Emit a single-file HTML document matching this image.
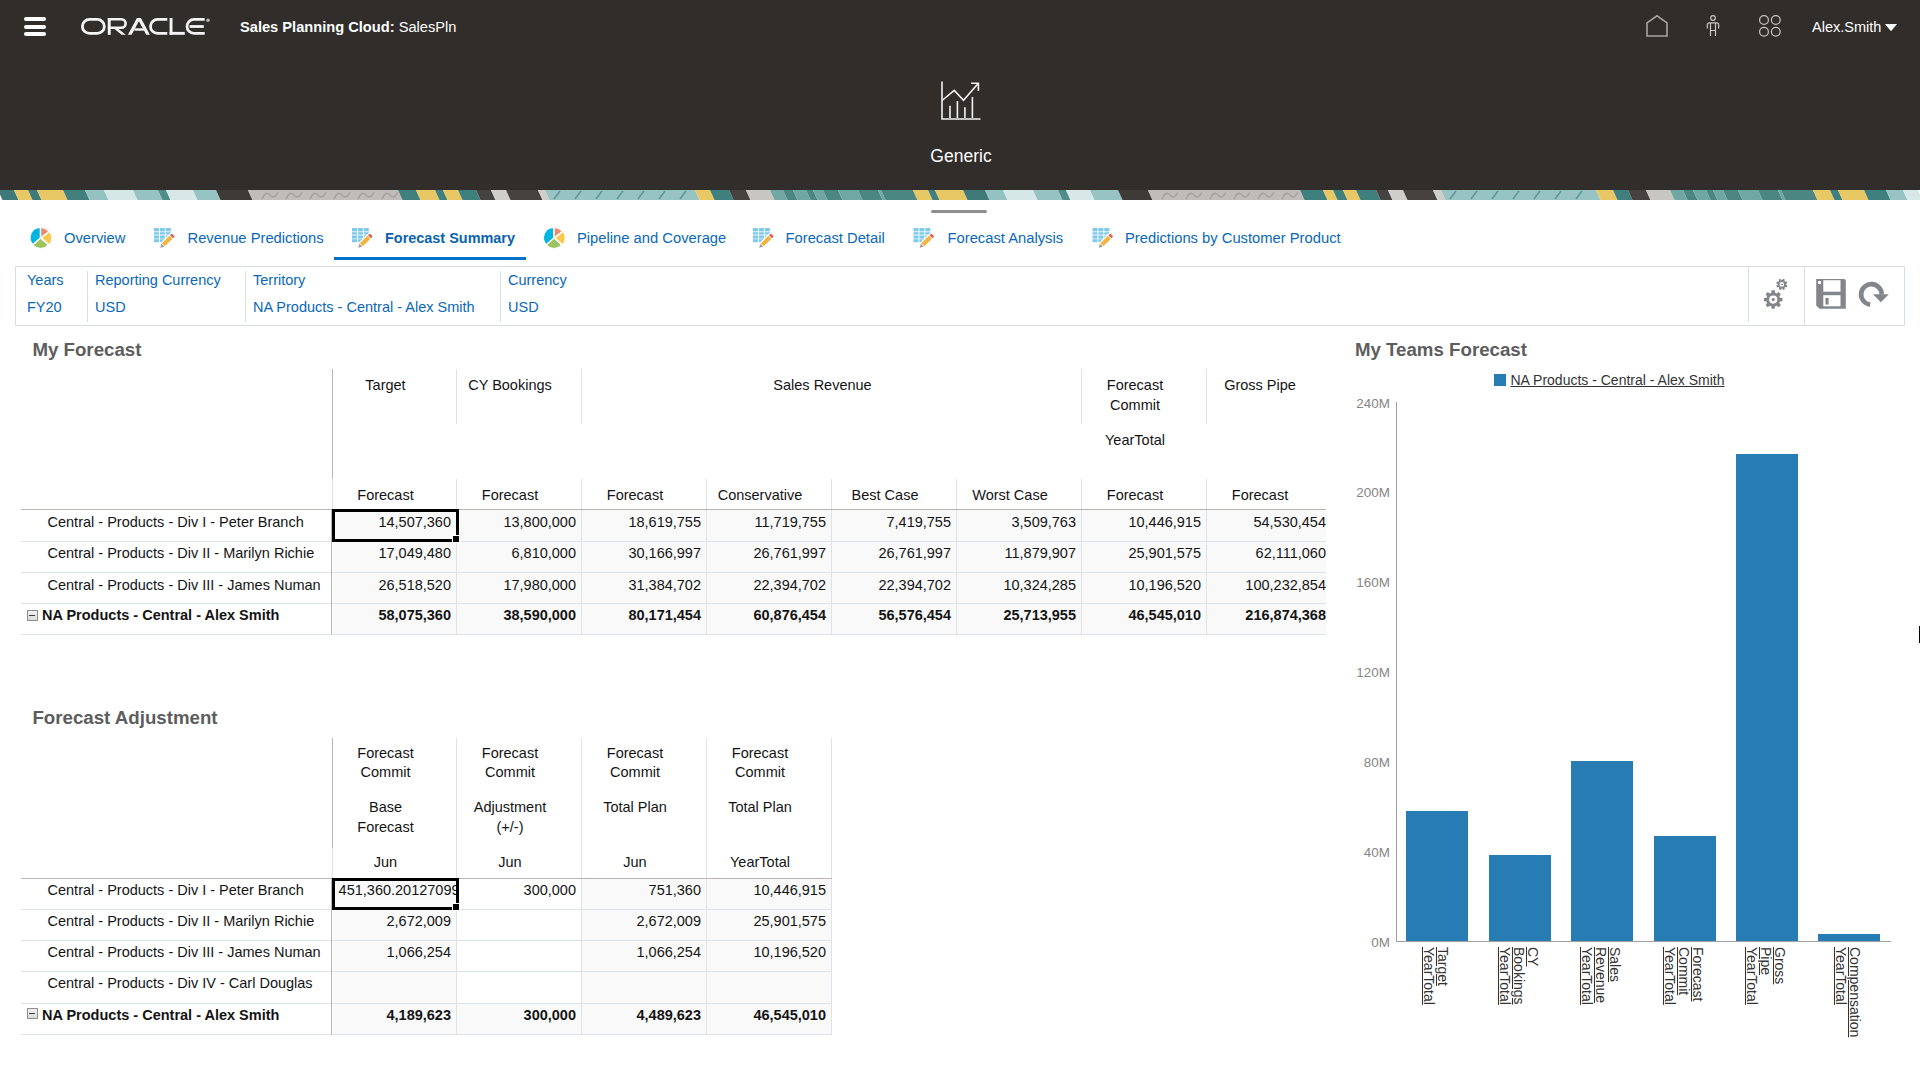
<!DOCTYPE html><html><head><meta charset="utf-8"><style>
html,body{margin:0;padding:0;width:1920px;height:1077px;overflow:hidden;background:#fff;font-family:"Liberation Sans",sans-serif;}
.t{position:absolute;white-space:nowrap;line-height:normal;}
.r{position:absolute;}
svg{position:absolute;overflow:visible;}
</style></head><body>
<div class="r" style="left:0px;top:0px;width:1920px;height:190px;background:#312d2a;"></div>
<div class="r" style="left:24px;top:17px;width:22px;height:4px;border-radius:2px;background:#fff"></div>
<div class="r" style="left:24px;top:24.5px;width:22px;height:4px;border-radius:2px;background:#fff"></div>
<div class="r" style="left:24px;top:32px;width:22px;height:4px;border-radius:2px;background:#fff"></div>
<svg style="left:0;top:0" width="1" height="1">
<g fill="none" stroke="#f4f4f4" stroke-width="2.8">
<rect x="82.4" y="19.4" width="21.9" height="14" rx="7"/>
<path d="M167.3 19.4 H157.5 A7 7 0 0 0 157.5 33.4 H167.3"/>
<path d="M204.7 19.4 H194 A7 7 0 0 0 194 33.4 H204.7"/>
</g>
<g fill="#f4f4f4">
<rect x="107.8" y="18" width="2.9" height="16.8"/>
<path d="M107.8 18 H121.4 A5.5 5.5 0 0 1 121.4 29 H107.8 V26.4 H121.4 A2.9 2.9 0 0 0 121.4 20.6 H107.8 Z"/>
<path d="M114.2 28.8 H118.2 L125.9 34.8 H121.6 Z"/>
<path d="M127.9 34.8 L136.9 18 H140.9 L149.9 34.8 H146.2 L138.9 21.2 L131.6 34.8 Z"/>
<rect x="134.5" y="28.3" width="10.2" height="2.4"/>
<rect x="169.6" y="18" width="2.9" height="16.8"/>
<rect x="169.6" y="31.9" width="15.2" height="2.9"/>
<rect x="189.6" y="25.1" width="14.2" height="2.8"/>
</g>
<circle cx="208" cy="20.3" r="1.8" fill="#b5b5b5"/></svg>
<div class="t" style="left:240.00px;top:18.74px;font-size:14.65px;color:#fff;font-weight:normal;"><b>Sales Planning Cloud:</b> SalesPln</div>
<svg style="left:0;top:0" width="1" height="1">
<path d="M1647 36 V22.8 L1657 15.8 L1667 22.8 V36 Z" fill="none" stroke="#a9a4a0" stroke-width="1.6"/>
<g fill="none" stroke="#cbc6c2" stroke-width="1.2">
<circle cx="1713" cy="18" r="2.3"/>
<path d="M1707.3 28.5 V24.8 Q1707.3 22.8 1709.5 22.8 H1716.5 Q1718.7 22.8 1718.7 24.8 V28.5"/>
<path d="M1710.5 23 V36 M1715.5 23 V36 M1710.5 30.5 H1715.5"/>
<circle cx="1764" cy="20" r="4.4"/><circle cx="1775.8" cy="20" r="4.4"/>
<circle cx="1764" cy="31.8" r="4.4"/><circle cx="1775.8" cy="31.8" r="4.4"/>
</g>
<path d="M1885 24 H1897 L1891 31.3 Z" fill="#fff"/>
</svg>
<div class="t" style="left:1812.00px;top:18.88px;font-size:14.5px;color:#fff;font-weight:normal;">Alex.Smith</div>
<svg style="left:0;top:0" width="1" height="1"><g fill="none" stroke="#f2f2f2" stroke-width="1.6">
<path d="M942 81.5 V119 H980.5"/>
<path d="M942 100.5 L954.3 90.4 L963.5 100.3 L978.4 83.2"/>
<path d="M971 83.2 H978.4 V91"/>
<path d="M950 105.8 V118 M957.4 101 V118 M964.9 107.2 V118 M972.4 97 V118"/>
</g></svg>
<div class="t" style="left:661.00px;width:600px;text-align:center;top:146.16px;font-size:17.5px;color:#fff;font-weight:normal;">Generic</div>
<svg style="left:0;top:190px" width="1920" height="10" viewBox="0 0 1920 10" preserveAspectRatio="none"><polygon points="-2,0 14,0 18.5,10 2.5,10" fill="#3f7a78"/><polygon points="14,0 28,0 32.5,10 18.5,10" fill="#e8c865"/><polygon points="28,0 37,0 41.5,10 32.5,10" fill="#3f7a78"/><polygon points="37,0 63,0 67.5,10 41.5,10" fill="#e8c865"/><polygon points="63,0 85,0 89.5,10 67.5,10" fill="#437f7d"/><polygon points="85,0 104,0 108.5,10 89.5,10" fill="#94c2c2"/><polygon points="104,0 133,0 137.5,10 108.5,10" fill="#d5e7e7"/><polygon points="133,0 158,0 162.5,10 137.5,10" fill="#97c2c2"/><polygon points="158,0 166,0 170.5,10 162.5,10" fill="#4f8c8a"/><polygon points="166,0 193,0 197.5,10 170.5,10" fill="#d8e8e8"/><polygon points="193,0 216,0 220.5,10 197.5,10" fill="#97c3c3"/><polygon points="216,0 248,0 252.5,10 220.5,10" fill="#3d3a38"/><polygon points="248,0 398,0 402.5,10 252.5,10" fill="#bfbcb9"/><polygon points="398,0 416,0 420.5,10 402.5,10" fill="#3f7f7d"/><polygon points="416,0 435,0 439.5,10 420.5,10" fill="#e8c865"/><polygon points="435,0 443,0 447.5,10 439.5,10" fill="#3f7f7d"/><polygon points="443,0 458,0 462.5,10 447.5,10" fill="#e8c865"/><polygon points="458,0 476,0 480.5,10 462.5,10" fill="#3f7f7d"/><polygon points="476,0 491,0 495.5,10 480.5,10" fill="#45423f"/><polygon points="491,0 506,0 510.5,10 495.5,10" fill="#d0cecb"/><polygon points="506,0 538,0 542.5,10 510.5,10" fill="#45423f"/><polygon points="538,0 545,0 549.5,10 542.5,10" fill="#d0cecb"/><polygon points="545,0 695,0 699.5,10 549.5,10" fill="#97c3c3"/><polygon points="695,0 710,0 714.5,10 699.5,10" fill="#e8c865"/><polygon points="710,0 729,0 733.5,10 714.5,10" fill="#3f7f7d"/><polygon points="729,0 746,0 750.5,10 733.5,10" fill="#47423f"/><polygon points="746,0 770,0 774.5,10 750.5,10" fill="#c8c6c2"/><polygon points="770,0 783,0 787.5,10 774.5,10" fill="#70a7a3"/><polygon points="783,0 793,0 797.5,10 787.5,10" fill="#4b8683"/><polygon points="793,0 806,0 810.5,10 797.5,10" fill="#70a7a3"/><polygon points="806,0 813,0 817.5,10 810.5,10" fill="#4b8683"/><polygon points="813,0 823,0 827.5,10 817.5,10" fill="#70a7a3"/><polygon points="823,0 838,0 842.5,10 827.5,10" fill="#4b8683"/><polygon points="838,0 858,0 862.5,10 842.5,10" fill="#70a7a3"/><polygon points="858,0 878,0 882.5,10 862.5,10" fill="#4b8683"/><polygon points="878,0 881,0 885.5,10 882.5,10" fill="#70a7a3"/><polygon points="881,0 913,0 917.5,10 885.5,10" fill="#4b8683"/><polygon points="913,0 928,0 932.5,10 917.5,10" fill="#e8c865"/><polygon points="928,0 935,0 939.5,10 932.5,10" fill="#3f7f7d"/><polygon points="935,0 963,0 967.5,10 939.5,10" fill="#e8c865"/><polygon points="963,0 985,0 989.5,10 967.5,10" fill="#3f7a78"/><polygon points="985,0 1003,0 1007.5,10 989.5,10" fill="#94c2c2"/><polygon points="1003,0 1033,0 1037.5,10 1007.5,10" fill="#d5e7e7"/><polygon points="1033,0 1058,0 1062.5,10 1037.5,10" fill="#97c2c2"/><polygon points="1058,0 1066,0 1070.5,10 1062.5,10" fill="#4f8c8a"/><polygon points="1066,0 1090,0 1094.5,10 1070.5,10" fill="#d8e8e8"/><polygon points="1090,0 1118,0 1122.5,10 1094.5,10" fill="#97c3c3"/><polygon points="1118,0 1148,0 1152.5,10 1122.5,10" fill="#3d3a38"/><polygon points="1148,0 1300,0 1304.5,10 1152.5,10" fill="#bfbcb9"/><polygon points="1300,0 1323,0 1327.5,10 1304.5,10" fill="#3f7f7d"/><polygon points="1323,0 1333,0 1337.5,10 1327.5,10" fill="#e8c865"/><polygon points="1333,0 1343,0 1347.5,10 1337.5,10" fill="#3f7f7d"/><polygon points="1343,0 1356,0 1360.5,10 1347.5,10" fill="#e8c865"/><polygon points="1356,0 1376,0 1380.5,10 1360.5,10" fill="#3f7f7d"/><polygon points="1376,0 1388,0 1392.5,10 1380.5,10" fill="#45423f"/><polygon points="1388,0 1403,0 1407.5,10 1392.5,10" fill="#d0cecb"/><polygon points="1403,0 1433,0 1437.5,10 1407.5,10" fill="#45423f"/><polygon points="1433,0 1441,0 1445.5,10 1437.5,10" fill="#d0cecb"/><polygon points="1441,0 1596,0 1600.5,10 1445.5,10" fill="#97c3c3"/><polygon points="1596,0 1613,0 1617.5,10 1600.5,10" fill="#e8c865"/><polygon points="1613,0 1628,0 1632.5,10 1617.5,10" fill="#3f7f7d"/><polygon points="1628,0 1646,0 1650.5,10 1632.5,10" fill="#47423f"/><polygon points="1646,0 1670,0 1674.5,10 1650.5,10" fill="#c8c6c2"/><polygon points="1670,0 1683,0 1687.5,10 1674.5,10" fill="#70a7a3"/><polygon points="1683,0 1693,0 1697.5,10 1687.5,10" fill="#4b8683"/><polygon points="1693,0 1706,0 1710.5,10 1697.5,10" fill="#70a7a3"/><polygon points="1706,0 1713,0 1717.5,10 1710.5,10" fill="#4b8683"/><polygon points="1713,0 1723,0 1727.5,10 1717.5,10" fill="#70a7a3"/><polygon points="1723,0 1738,0 1742.5,10 1727.5,10" fill="#4b8683"/><polygon points="1738,0 1758,0 1762.5,10 1742.5,10" fill="#70a7a3"/><polygon points="1758,0 1778,0 1782.5,10 1762.5,10" fill="#4b8683"/><polygon points="1778,0 1781,0 1785.5,10 1782.5,10" fill="#70a7a3"/><polygon points="1781,0 1813,0 1817.5,10 1785.5,10" fill="#4b8683"/><polygon points="1813,0 1830,0 1834.5,10 1817.5,10" fill="#e8c865"/><polygon points="1830,0 1838,0 1842.5,10 1834.5,10" fill="#3f7f7d"/><polygon points="1838,0 1864,0 1868.5,10 1842.5,10" fill="#e8c865"/><polygon points="1864,0 1886,0 1890.5,10 1868.5,10" fill="#3f7f7d"/><polygon points="1886,0 1903,0 1907.5,10 1890.5,10" fill="#97c3c3"/><polygon points="1903,0 1918,0 1922.5,10 1907.5,10" fill="#d8e8e8"/><path d="M560 1 L554 9" stroke="#5d9896" stroke-width="1.6"/><path d="M581 1 L575 9" stroke="#5d9896" stroke-width="1.6"/><path d="M602 1 L596 9" stroke="#5d9896" stroke-width="1.6"/><path d="M623 1 L617 9" stroke="#5d9896" stroke-width="1.6"/><path d="M644 1 L638 9" stroke="#5d9896" stroke-width="1.6"/><path d="M665 1 L659 9" stroke="#5d9896" stroke-width="1.6"/><path d="M686 1 L680 9" stroke="#5d9896" stroke-width="1.6"/><path d="M1456 1 L1450 9" stroke="#5d9896" stroke-width="1.6"/><path d="M1477 1 L1471 9" stroke="#5d9896" stroke-width="1.6"/><path d="M1498 1 L1492 9" stroke="#5d9896" stroke-width="1.6"/><path d="M1519 1 L1513 9" stroke="#5d9896" stroke-width="1.6"/><path d="M1540 1 L1534 9" stroke="#5d9896" stroke-width="1.6"/><path d="M1561 1 L1555 9" stroke="#5d9896" stroke-width="1.6"/><path d="M1582 1 L1576 9" stroke="#5d9896" stroke-width="1.6"/><path d="M262 9 Q266 0 270 5 T278 2" fill="none" stroke="#a7a39f" stroke-width="1.5"/><path d="M286 9 Q290 0 294 5 T302 2" fill="none" stroke="#a7a39f" stroke-width="1.5"/><path d="M310 9 Q314 0 318 5 T326 2" fill="none" stroke="#a7a39f" stroke-width="1.5"/><path d="M334 9 Q338 0 342 5 T350 2" fill="none" stroke="#a7a39f" stroke-width="1.5"/><path d="M358 9 Q362 0 366 5 T374 2" fill="none" stroke="#a7a39f" stroke-width="1.5"/><path d="M382 9 Q386 0 390 5 T398 2" fill="none" stroke="#a7a39f" stroke-width="1.5"/><path d="M1162 9 Q1166 0 1170 5 T1178 2" fill="none" stroke="#a7a39f" stroke-width="1.5"/><path d="M1186 9 Q1190 0 1194 5 T1202 2" fill="none" stroke="#a7a39f" stroke-width="1.5"/><path d="M1210 9 Q1214 0 1218 5 T1226 2" fill="none" stroke="#a7a39f" stroke-width="1.5"/><path d="M1234 9 Q1238 0 1242 5 T1250 2" fill="none" stroke="#a7a39f" stroke-width="1.5"/><path d="M1258 9 Q1262 0 1266 5 T1274 2" fill="none" stroke="#a7a39f" stroke-width="1.5"/><path d="M1282 9 Q1286 0 1290 5 T1298 2" fill="none" stroke="#a7a39f" stroke-width="1.5"/></svg>
<div class="r" style="left:930.5px;top:210px;width:56px;height:3.2px;background:#8f8f8f;border-radius:2px;"></div>
<svg style="left:0;top:0" width="1" height="1"><path d="M40.73 237.53 L40.73 227.53 A10 10 0 0 1 48.61 231.37 Z" fill="#ec8a70" stroke="#fff" stroke-width="1"/><path d="M41.80 237.84 L49.68 231.69 A10 10 0 0 1 49.23 244.53 Z" fill="#f8c94a" stroke="#fff" stroke-width="1"/><path d="M40.60 238.40 L48.03 245.09 A10 10 0 0 1 33.17 245.09 Z" fill="#9cc45e" stroke="#fff" stroke-width="1"/><path d="M40.23 237.64 L32.80 244.33 A10 10 0 0 1 40.23 227.64 Z" fill="#00b5e0" stroke="#fff" stroke-width="1"/><rect x="154.00" y="228.00" width="5" height="3.4" fill="#7ecbe9"/><rect x="154.00" y="232.20" width="5" height="2.4" fill="#7ecbe9"/><rect x="154.00" y="234.60" width="5" height="1.4" fill="#b7e1f2"/><rect x="154.00" y="236.00" width="5" height="2.6" fill="#7ecbe9"/><rect x="154.00" y="239.20" width="5" height="3.0" fill="#7ecbe9"/><rect x="159.90" y="228.00" width="5" height="3.4" fill="#7ecbe9"/><rect x="159.90" y="232.20" width="5" height="2.4" fill="#7ecbe9"/><rect x="159.90" y="234.60" width="5" height="1.4" fill="#b7e1f2"/><rect x="159.90" y="236.00" width="5" height="2.6" fill="#7ecbe9"/><rect x="159.90" y="239.20" width="5" height="3.0" fill="#7ecbe9"/><rect x="165.80" y="228.00" width="5" height="3.4" fill="#7ecbe9"/><rect x="165.80" y="232.20" width="5" height="2.4" fill="#7ecbe9"/><rect x="165.80" y="234.60" width="5" height="1.4" fill="#b7e1f2"/><rect x="165.80" y="236.00" width="5" height="2.6" fill="#7ecbe9"/><rect x="165.80" y="239.20" width="5" height="3.0" fill="#7ecbe9"/><polygon points="157.54,245.79 171.42,232.22 176.04,236.94 162.15,250.51" fill="#fff"/><polygon points="160.20,247.80 161.31,243.78 164.24,246.79" fill="#9a9c9e"/><polygon points="161.81,243.29 169.40,235.87 172.34,238.88 164.74,246.30" fill="#f4b540"/><polygon points="169.97,235.32 171.55,233.78 172.42,234.10 174.18,235.90 174.48,236.78 172.91,238.32" fill="#e65b4c"/><rect x="352.00" y="228.00" width="5" height="3.4" fill="#7ecbe9"/><rect x="352.00" y="232.20" width="5" height="2.4" fill="#7ecbe9"/><rect x="352.00" y="234.60" width="5" height="1.4" fill="#b7e1f2"/><rect x="352.00" y="236.00" width="5" height="2.6" fill="#7ecbe9"/><rect x="352.00" y="239.20" width="5" height="3.0" fill="#7ecbe9"/><rect x="357.90" y="228.00" width="5" height="3.4" fill="#7ecbe9"/><rect x="357.90" y="232.20" width="5" height="2.4" fill="#7ecbe9"/><rect x="357.90" y="234.60" width="5" height="1.4" fill="#b7e1f2"/><rect x="357.90" y="236.00" width="5" height="2.6" fill="#7ecbe9"/><rect x="357.90" y="239.20" width="5" height="3.0" fill="#7ecbe9"/><rect x="363.80" y="228.00" width="5" height="3.4" fill="#7ecbe9"/><rect x="363.80" y="232.20" width="5" height="2.4" fill="#7ecbe9"/><rect x="363.80" y="234.60" width="5" height="1.4" fill="#b7e1f2"/><rect x="363.80" y="236.00" width="5" height="2.6" fill="#7ecbe9"/><rect x="363.80" y="239.20" width="5" height="3.0" fill="#7ecbe9"/><polygon points="355.54,245.79 369.42,232.22 374.04,236.94 360.15,250.51" fill="#fff"/><polygon points="358.20,247.80 359.31,243.78 362.24,246.79" fill="#9a9c9e"/><polygon points="359.81,243.29 367.40,235.87 370.34,238.88 362.74,246.30" fill="#f4b540"/><polygon points="367.97,235.32 369.55,233.78 370.42,234.10 372.18,235.90 372.48,236.78 370.91,238.32" fill="#e65b4c"/><path d="M554.13 237.53 L554.13 227.53 A10 10 0 0 1 562.01 231.37 Z" fill="#ec8a70" stroke="#fff" stroke-width="1"/><path d="M555.20 237.84 L563.08 231.69 A10 10 0 0 1 562.63 244.53 Z" fill="#f8c94a" stroke="#fff" stroke-width="1"/><path d="M554.00 238.40 L561.43 245.09 A10 10 0 0 1 546.57 245.09 Z" fill="#9cc45e" stroke="#fff" stroke-width="1"/><path d="M553.63 237.64 L546.20 244.33 A10 10 0 0 1 553.63 227.64 Z" fill="#00b5e0" stroke="#fff" stroke-width="1"/><rect x="753.00" y="228.00" width="5" height="3.4" fill="#7ecbe9"/><rect x="753.00" y="232.20" width="5" height="2.4" fill="#7ecbe9"/><rect x="753.00" y="234.60" width="5" height="1.4" fill="#b7e1f2"/><rect x="753.00" y="236.00" width="5" height="2.6" fill="#7ecbe9"/><rect x="753.00" y="239.20" width="5" height="3.0" fill="#7ecbe9"/><rect x="758.90" y="228.00" width="5" height="3.4" fill="#7ecbe9"/><rect x="758.90" y="232.20" width="5" height="2.4" fill="#7ecbe9"/><rect x="758.90" y="234.60" width="5" height="1.4" fill="#b7e1f2"/><rect x="758.90" y="236.00" width="5" height="2.6" fill="#7ecbe9"/><rect x="758.90" y="239.20" width="5" height="3.0" fill="#7ecbe9"/><rect x="764.80" y="228.00" width="5" height="3.4" fill="#7ecbe9"/><rect x="764.80" y="232.20" width="5" height="2.4" fill="#7ecbe9"/><rect x="764.80" y="234.60" width="5" height="1.4" fill="#b7e1f2"/><rect x="764.80" y="236.00" width="5" height="2.6" fill="#7ecbe9"/><rect x="764.80" y="239.20" width="5" height="3.0" fill="#7ecbe9"/><polygon points="756.54,245.79 770.42,232.22 775.04,236.94 761.15,250.51" fill="#fff"/><polygon points="759.20,247.80 760.31,243.78 763.24,246.79" fill="#9a9c9e"/><polygon points="760.81,243.29 768.40,235.87 771.34,238.88 763.74,246.30" fill="#f4b540"/><polygon points="768.97,235.32 770.55,233.78 771.42,234.10 773.18,235.90 773.48,236.78 771.91,238.32" fill="#e65b4c"/><rect x="913.50" y="228.00" width="5" height="3.4" fill="#7ecbe9"/><rect x="913.50" y="232.20" width="5" height="2.4" fill="#7ecbe9"/><rect x="913.50" y="234.60" width="5" height="1.4" fill="#b7e1f2"/><rect x="913.50" y="236.00" width="5" height="2.6" fill="#7ecbe9"/><rect x="913.50" y="239.20" width="5" height="3.0" fill="#7ecbe9"/><rect x="919.40" y="228.00" width="5" height="3.4" fill="#7ecbe9"/><rect x="919.40" y="232.20" width="5" height="2.4" fill="#7ecbe9"/><rect x="919.40" y="234.60" width="5" height="1.4" fill="#b7e1f2"/><rect x="919.40" y="236.00" width="5" height="2.6" fill="#7ecbe9"/><rect x="919.40" y="239.20" width="5" height="3.0" fill="#7ecbe9"/><rect x="925.30" y="228.00" width="5" height="3.4" fill="#7ecbe9"/><rect x="925.30" y="232.20" width="5" height="2.4" fill="#7ecbe9"/><rect x="925.30" y="234.60" width="5" height="1.4" fill="#b7e1f2"/><rect x="925.30" y="236.00" width="5" height="2.6" fill="#7ecbe9"/><rect x="925.30" y="239.20" width="5" height="3.0" fill="#7ecbe9"/><polygon points="917.04,245.79 930.92,232.22 935.54,236.94 921.65,250.51" fill="#fff"/><polygon points="919.70,247.80 920.81,243.78 923.74,246.79" fill="#9a9c9e"/><polygon points="921.31,243.29 928.90,235.87 931.84,238.88 924.24,246.30" fill="#f4b540"/><polygon points="929.47,235.32 931.05,233.78 931.92,234.10 933.68,235.90 933.98,236.78 932.41,238.32" fill="#e65b4c"/><rect x="1092.50" y="228.00" width="5" height="3.4" fill="#7ecbe9"/><rect x="1092.50" y="232.20" width="5" height="2.4" fill="#7ecbe9"/><rect x="1092.50" y="234.60" width="5" height="1.4" fill="#b7e1f2"/><rect x="1092.50" y="236.00" width="5" height="2.6" fill="#7ecbe9"/><rect x="1092.50" y="239.20" width="5" height="3.0" fill="#7ecbe9"/><rect x="1098.40" y="228.00" width="5" height="3.4" fill="#7ecbe9"/><rect x="1098.40" y="232.20" width="5" height="2.4" fill="#7ecbe9"/><rect x="1098.40" y="234.60" width="5" height="1.4" fill="#b7e1f2"/><rect x="1098.40" y="236.00" width="5" height="2.6" fill="#7ecbe9"/><rect x="1098.40" y="239.20" width="5" height="3.0" fill="#7ecbe9"/><rect x="1104.30" y="228.00" width="5" height="3.4" fill="#7ecbe9"/><rect x="1104.30" y="232.20" width="5" height="2.4" fill="#7ecbe9"/><rect x="1104.30" y="234.60" width="5" height="1.4" fill="#b7e1f2"/><rect x="1104.30" y="236.00" width="5" height="2.6" fill="#7ecbe9"/><rect x="1104.30" y="239.20" width="5" height="3.0" fill="#7ecbe9"/><polygon points="1096.04,245.79 1109.92,232.22 1114.54,236.94 1100.65,250.51" fill="#fff"/><polygon points="1098.70,247.80 1099.81,243.78 1102.74,246.79" fill="#9a9c9e"/><polygon points="1100.31,243.29 1107.90,235.87 1110.84,238.88 1103.24,246.30" fill="#f4b540"/><polygon points="1108.47,235.32 1110.05,233.78 1110.92,234.10 1112.68,235.90 1112.98,236.78 1111.41,238.32" fill="#e65b4c"/></svg>
<div class="t" style="left:64.00px;top:229.65px;font-size:14.75px;color:#0a68b9;font-weight:normal;">Overview</div>
<div class="t" style="left:187.50px;top:229.65px;font-size:14.75px;color:#0a68b9;font-weight:normal;">Revenue Predictions</div>
<div class="t" style="left:385.00px;top:229.92px;font-size:14.45px;color:#0a62ae;font-weight:bold;">Forecast Summary</div>
<div class="r" style="left:334px;top:257px;width:192px;height:3px;background:#0572ce;"></div>
<div class="t" style="left:577.00px;top:229.65px;font-size:14.75px;color:#0a68b9;font-weight:normal;">Pipeline and Coverage</div>
<div class="t" style="left:785.50px;top:229.65px;font-size:14.75px;color:#0a68b9;font-weight:normal;">Forecast Detail</div>
<div class="t" style="left:947.50px;top:229.65px;font-size:14.75px;color:#0a68b9;font-weight:normal;">Forecast Analysis</div>
<div class="t" style="left:1125.00px;top:229.65px;font-size:14.75px;color:#0a68b9;font-weight:normal;">Predictions by Customer Product</div>
<div class="r" style="left:15px;top:266px;width:1888px;height:58px;border:1px solid #d6dfe6;"></div>
<div class="r" style="left:87px;top:271px;width:1px;height:51px;background:#d6dfe6;"></div>
<div class="r" style="left:245px;top:271px;width:1px;height:51px;background:#d6dfe6;"></div>
<div class="r" style="left:500px;top:271px;width:1px;height:51px;background:#d6dfe6;"></div>
<div class="r" style="left:1748px;top:266px;width:1px;height:56px;background:#d6dfe6;"></div>
<div class="r" style="left:1804px;top:266px;width:1px;height:59px;background:#d6dfe6;"></div>
<div class="t" style="left:27.00px;top:271.58px;font-size:14.5px;color:#0a68b9;font-weight:normal;">Years</div>
<div class="t" style="left:27.00px;top:298.88px;font-size:14.5px;color:#0a68b9;font-weight:normal;">FY20</div>
<div class="t" style="left:95.00px;top:271.58px;font-size:14.5px;color:#0a68b9;font-weight:normal;">Reporting Currency</div>
<div class="t" style="left:95.00px;top:298.88px;font-size:14.5px;color:#0a68b9;font-weight:normal;">USD</div>
<div class="t" style="left:253.00px;top:271.58px;font-size:14.5px;color:#0a68b9;font-weight:normal;">Territory</div>
<div class="t" style="left:253.00px;top:298.88px;font-size:14.5px;color:#0a68b9;font-weight:normal;">NA Products - Central - Alex Smith</div>
<div class="t" style="left:508.00px;top:271.58px;font-size:14.5px;color:#0a68b9;font-weight:normal;">Currency</div>
<div class="t" style="left:508.00px;top:298.88px;font-size:14.5px;color:#0a68b9;font-weight:normal;">USD</div>
<svg style="left:0;top:0" width="1" height="1"><path d="M1779.93 297.67 L1782.47 298.03 L1782.47 301.17 L1779.93 301.53 L1779.32 302.99 L1780.86 305.05 L1778.65 307.26 L1776.59 305.72 L1775.13 306.33 L1774.77 308.87 L1771.63 308.87 L1771.27 306.33 L1769.81 305.72 L1767.75 307.26 L1765.54 305.05 L1767.08 302.99 L1766.47 301.53 L1763.93 301.17 L1763.93 298.03 L1766.47 297.67 L1767.08 296.21 L1765.54 294.15 L1767.75 291.94 L1769.81 293.48 L1771.27 292.87 L1771.63 290.33 L1774.77 290.33 L1775.13 292.87 L1776.59 293.48 L1778.65 291.94 L1780.86 294.15 L1779.32 296.21 Z M1777.30 299.60 A4.1 4.1 0 1 0 1769.10 299.60 A4.1 4.1 0 1 0 1777.30 299.60 Z" fill="#82868b" fill-rule="evenodd"/><circle cx="1773.2" cy="299.6" r="1.6" fill="#82868b"/><path d="M1786.08 284.85 L1787.37 285.62 L1786.65 287.39 L1785.19 287.05 L1784.51 287.74 L1784.87 289.20 L1783.12 289.94 L1782.32 288.67 L1781.35 288.68 L1780.58 289.97 L1778.81 289.25 L1779.15 287.79 L1778.46 287.11 L1777.00 287.47 L1776.26 285.72 L1777.53 284.92 L1777.52 283.95 L1776.23 283.18 L1776.95 281.41 L1778.41 281.75 L1779.09 281.06 L1778.73 279.60 L1780.48 278.86 L1781.28 280.13 L1782.25 280.12 L1783.02 278.83 L1784.79 279.55 L1784.45 281.01 L1785.14 281.69 L1786.60 281.33 L1787.34 283.08 L1786.07 283.88 Z M1784.10 284.40 A2.3 2.3 0 1 0 1779.50 284.40 A2.3 2.3 0 1 0 1784.10 284.40 Z" fill="#82868b" fill-rule="evenodd"/><rect x="1780.6" y="283.9" width="2.4" height="1" fill="#82868b"/><path d="M1816.2 279 H1843.8 Q1845.8 279 1845.8 281 V308.8 H1819.5 L1816.2 305.5 Z" fill="#82868b"/><rect x="1823.3" y="280.2" width="17.2" height="11.5" fill="#fff"/><rect x="1823.3" y="295.2" width="17.2" height="11.1" fill="#fff"/><rect x="1825.5" y="297.9" width="3.1" height="6.6" fill="#82868b"/><rect x="1818" y="281" width="3" height="3" fill="#fff"/><path d="M1870.15 304.6 A10.3 10.3 0 1 1 1881.7 294.4" fill="none" stroke="#82868b" stroke-width="4.7"/><path d="M1873 294.3 H1888.8 L1880.8 302.3 Z" fill="#82868b"/></svg>
<div class="t" style="left:32.40px;top:338.68px;font-size:18.7px;color:#5d5d5d;font-weight:bold;">My Forecast</div>
<div class="t" style="left:1354.90px;top:338.68px;font-size:18.7px;color:#5d5d5d;font-weight:bold;">My Teams Forecast</div>
<div class="t" style="left:32.40px;top:706.58px;font-size:18.7px;color:#5d5d5d;font-weight:bold;">Forecast Adjustment</div>
<div class="r" style="left:333px;top:510px;width:993px;height:31px;background:#f9f9f9;"></div>
<div class="r" style="left:333px;top:542px;width:993px;height:30px;background:#f9f9f9;"></div>
<div class="r" style="left:333px;top:573px;width:993px;height:30px;background:#f9f9f9;"></div>
<div class="r" style="left:333px;top:604px;width:993px;height:30px;background:#f9f9f9;"></div>
<div class="r" style="left:332px;top:369px;width:1px;height:110px;background:#b9b5b1;"></div>
<div class="r" style="left:332px;top:479px;width:1px;height:30px;background:#dde3e9;"></div>
<div class="r" style="left:456px;top:369px;width:1px;height:55px;background:#dde3e9;"></div>
<div class="r" style="left:581px;top:369px;width:1px;height:55px;background:#dde3e9;"></div>
<div class="r" style="left:1081px;top:369px;width:1px;height:55px;background:#dde3e9;"></div>
<div class="r" style="left:1206px;top:369px;width:1px;height:55px;background:#dde3e9;"></div>
<div class="r" style="left:456px;top:479px;width:1px;height:30px;background:#dde3e9;"></div>
<div class="r" style="left:581px;top:479px;width:1px;height:30px;background:#dde3e9;"></div>
<div class="r" style="left:706px;top:479px;width:1px;height:30px;background:#dde3e9;"></div>
<div class="r" style="left:831px;top:479px;width:1px;height:30px;background:#dde3e9;"></div>
<div class="r" style="left:956px;top:479px;width:1px;height:30px;background:#dde3e9;"></div>
<div class="r" style="left:1081px;top:479px;width:1px;height:30px;background:#dde3e9;"></div>
<div class="r" style="left:1206px;top:479px;width:1px;height:30px;background:#dde3e9;"></div>
<div class="r" style="left:21px;top:509px;width:1305px;height:1px;background:#b9b5b1;"></div>
<div class="r" style="left:21px;top:541px;width:1305px;height:1px;background:#dde3e9;"></div>
<div class="r" style="left:21px;top:572px;width:1305px;height:1px;background:#dde3e9;"></div>
<div class="r" style="left:21px;top:603px;width:1305px;height:1px;background:#dde3e9;"></div>
<div class="r" style="left:21px;top:634px;width:1305px;height:1px;background:#dde3e9;"></div>
<div class="r" style="left:331px;top:510px;width:1px;height:124px;background:#b9b5b1;"></div>
<div class="r" style="left:456px;top:510px;width:1px;height:124px;background:#dde3e9;"></div>
<div class="r" style="left:581px;top:510px;width:1px;height:124px;background:#dde3e9;"></div>
<div class="r" style="left:706px;top:510px;width:1px;height:124px;background:#dde3e9;"></div>
<div class="r" style="left:831px;top:510px;width:1px;height:124px;background:#dde3e9;"></div>
<div class="r" style="left:956px;top:510px;width:1px;height:124px;background:#dde3e9;"></div>
<div class="r" style="left:1081px;top:510px;width:1px;height:124px;background:#dde3e9;"></div>
<div class="r" style="left:1206px;top:510px;width:1px;height:124px;background:#dde3e9;"></div>
<div class="t" style="left:85.50px;width:600px;text-align:center;top:377.08px;font-size:14.5px;color:#141414;font-weight:normal;">Target</div>
<div class="t" style="left:210.00px;width:600px;text-align:center;top:377.08px;font-size:14.5px;color:#141414;font-weight:normal;">CY Bookings</div>
<div class="t" style="left:522.50px;width:600px;text-align:center;top:377.08px;font-size:14.5px;color:#141414;font-weight:normal;">Sales Revenue</div>
<div class="t" style="left:835.00px;width:600px;text-align:center;top:377.48px;font-size:14.5px;color:#141414;font-weight:normal;">Forecast</div>
<div class="t" style="left:835.00px;width:600px;text-align:center;top:397.48px;font-size:14.5px;color:#141414;font-weight:normal;">Commit</div>
<div class="t" style="left:960.00px;width:600px;text-align:center;top:377.08px;font-size:14.5px;color:#141414;font-weight:normal;">Gross Pipe</div>
<div class="t" style="left:835.00px;width:600px;text-align:center;top:432.48px;font-size:14.5px;color:#141414;font-weight:normal;">YearTotal</div>
<div class="t" style="left:85.50px;width:600px;text-align:center;top:486.58px;font-size:14.5px;color:#141414;font-weight:normal;">Forecast</div>
<div class="t" style="left:210.00px;width:600px;text-align:center;top:486.58px;font-size:14.5px;color:#141414;font-weight:normal;">Forecast</div>
<div class="t" style="left:335.00px;width:600px;text-align:center;top:486.58px;font-size:14.5px;color:#141414;font-weight:normal;">Forecast</div>
<div class="t" style="left:460.00px;width:600px;text-align:center;top:486.58px;font-size:14.5px;color:#141414;font-weight:normal;">Conservative</div>
<div class="t" style="left:585.00px;width:600px;text-align:center;top:486.58px;font-size:14.5px;color:#141414;font-weight:normal;">Best Case</div>
<div class="t" style="left:710.00px;width:600px;text-align:center;top:486.58px;font-size:14.5px;color:#141414;font-weight:normal;">Worst Case</div>
<div class="t" style="left:835.00px;width:600px;text-align:center;top:486.58px;font-size:14.5px;color:#141414;font-weight:normal;">Forecast</div>
<div class="t" style="left:960.00px;width:600px;text-align:center;top:486.58px;font-size:14.5px;color:#141414;font-weight:normal;">Forecast</div>
<div class="r" style="left:0;top:0;width:1326px;height:1077px;overflow:hidden;">
<div class="t" style="left:47.50px;top:514.08px;font-size:14.5px;color:#141414;font-weight:normal;">Central - Products - Div I - Peter Branch</div>
<div class="t" style="left:-149.00px;width:600px;text-align:right;top:514.08px;font-size:14.5px;color:#141414;font-weight:normal;">14,507,360</div>
<div class="t" style="left:-24.00px;width:600px;text-align:right;top:514.08px;font-size:14.5px;color:#141414;font-weight:normal;">13,800,000</div>
<div class="t" style="left:101.00px;width:600px;text-align:right;top:514.08px;font-size:14.5px;color:#141414;font-weight:normal;">18,619,755</div>
<div class="t" style="left:226.00px;width:600px;text-align:right;top:514.08px;font-size:14.5px;color:#141414;font-weight:normal;">11,719,755</div>
<div class="t" style="left:351.00px;width:600px;text-align:right;top:514.08px;font-size:14.5px;color:#141414;font-weight:normal;">7,419,755</div>
<div class="t" style="left:476.00px;width:600px;text-align:right;top:514.08px;font-size:14.5px;color:#141414;font-weight:normal;">3,509,763</div>
<div class="t" style="left:601.00px;width:600px;text-align:right;top:514.08px;font-size:14.5px;color:#141414;font-weight:normal;">10,446,915</div>
<div class="t" style="left:726.00px;width:600px;text-align:right;top:514.08px;font-size:14.5px;color:#141414;font-weight:normal;">54,530,454</div>
<div class="t" style="left:47.50px;top:545.28px;font-size:14.5px;color:#141414;font-weight:normal;">Central - Products - Div II - Marilyn Richie</div>
<div class="t" style="left:-149.00px;width:600px;text-align:right;top:545.28px;font-size:14.5px;color:#141414;font-weight:normal;">17,049,480</div>
<div class="t" style="left:-24.00px;width:600px;text-align:right;top:545.28px;font-size:14.5px;color:#141414;font-weight:normal;">6,810,000</div>
<div class="t" style="left:101.00px;width:600px;text-align:right;top:545.28px;font-size:14.5px;color:#141414;font-weight:normal;">30,166,997</div>
<div class="t" style="left:226.00px;width:600px;text-align:right;top:545.28px;font-size:14.5px;color:#141414;font-weight:normal;">26,761,997</div>
<div class="t" style="left:351.00px;width:600px;text-align:right;top:545.28px;font-size:14.5px;color:#141414;font-weight:normal;">26,761,997</div>
<div class="t" style="left:476.00px;width:600px;text-align:right;top:545.28px;font-size:14.5px;color:#141414;font-weight:normal;">11,879,907</div>
<div class="t" style="left:601.00px;width:600px;text-align:right;top:545.28px;font-size:14.5px;color:#141414;font-weight:normal;">25,901,575</div>
<div class="t" style="left:726.00px;width:600px;text-align:right;top:545.28px;font-size:14.5px;color:#141414;font-weight:normal;">62,111,060</div>
<div class="t" style="left:47.50px;top:577.28px;font-size:14.5px;color:#141414;font-weight:normal;">Central - Products - Div III - James Numan</div>
<div class="t" style="left:-149.00px;width:600px;text-align:right;top:577.28px;font-size:14.5px;color:#141414;font-weight:normal;">26,518,520</div>
<div class="t" style="left:-24.00px;width:600px;text-align:right;top:577.28px;font-size:14.5px;color:#141414;font-weight:normal;">17,980,000</div>
<div class="t" style="left:101.00px;width:600px;text-align:right;top:577.28px;font-size:14.5px;color:#141414;font-weight:normal;">31,384,702</div>
<div class="t" style="left:226.00px;width:600px;text-align:right;top:577.28px;font-size:14.5px;color:#141414;font-weight:normal;">22,394,702</div>
<div class="t" style="left:351.00px;width:600px;text-align:right;top:577.28px;font-size:14.5px;color:#141414;font-weight:normal;">22,394,702</div>
<div class="t" style="left:476.00px;width:600px;text-align:right;top:577.28px;font-size:14.5px;color:#141414;font-weight:normal;">10,324,285</div>
<div class="t" style="left:601.00px;width:600px;text-align:right;top:577.28px;font-size:14.5px;color:#141414;font-weight:normal;">10,196,520</div>
<div class="t" style="left:726.00px;width:600px;text-align:right;top:577.28px;font-size:14.5px;color:#141414;font-weight:normal;">100,232,854</div>
<div class="r" style="left:27px;top:610px;width:9px;height:9px;border:1px solid #8e8e8a;background:linear-gradient(#f2f2f2,#dcdcdc);"></div>
<div class="r" style="left:29.2px;top:615.0px;width:6.2px;height:1.3px;background:#3a3a3a;"></div>
<div class="t" style="left:42.00px;top:607.28px;font-size:14.5px;color:#141414;font-weight:bold;">NA Products - Central - Alex Smith</div>
<div class="t" style="left:-149.00px;width:600px;text-align:right;top:607.28px;font-size:14.5px;color:#141414;font-weight:bold;">58,075,360</div>
<div class="t" style="left:-24.00px;width:600px;text-align:right;top:607.28px;font-size:14.5px;color:#141414;font-weight:bold;">38,590,000</div>
<div class="t" style="left:101.00px;width:600px;text-align:right;top:607.28px;font-size:14.5px;color:#141414;font-weight:bold;">80,171,454</div>
<div class="t" style="left:226.00px;width:600px;text-align:right;top:607.28px;font-size:14.5px;color:#141414;font-weight:bold;">60,876,454</div>
<div class="t" style="left:351.00px;width:600px;text-align:right;top:607.28px;font-size:14.5px;color:#141414;font-weight:bold;">56,576,454</div>
<div class="t" style="left:476.00px;width:600px;text-align:right;top:607.28px;font-size:14.5px;color:#141414;font-weight:bold;">25,713,955</div>
<div class="t" style="left:601.00px;width:600px;text-align:right;top:607.28px;font-size:14.5px;color:#141414;font-weight:bold;">46,545,010</div>
<div class="t" style="left:726.00px;width:600px;text-align:right;top:607.28px;font-size:14.5px;color:#141414;font-weight:bold;">216,874,368</div>
</div>
<div class="r" style="left:332px;top:509px;width:121px;height:27px;border:3px solid #000;"></div>
<div class="r" style="left:453px;top:536px;width:6px;height:6px;background:#000;outline:1px solid #fff;"></div>
<div class="r" style="left:333px;top:879px;width:123px;height:30px;background:#f9f9f9;"></div>
<div class="r" style="left:457px;top:879px;width:124px;height:30px;background:#fff;"></div>
<div class="r" style="left:582px;top:879px;width:124px;height:30px;background:#f9f9f9;"></div>
<div class="r" style="left:707px;top:879px;width:124px;height:30px;background:#f9f9f9;"></div>
<div class="r" style="left:333px;top:910px;width:123px;height:30px;background:#f9f9f9;"></div>
<div class="r" style="left:457px;top:910px;width:124px;height:30px;background:#fff;"></div>
<div class="r" style="left:582px;top:910px;width:124px;height:30px;background:#f9f9f9;"></div>
<div class="r" style="left:707px;top:910px;width:124px;height:30px;background:#f9f9f9;"></div>
<div class="r" style="left:333px;top:941px;width:123px;height:30px;background:#f9f9f9;"></div>
<div class="r" style="left:457px;top:941px;width:124px;height:30px;background:#fff;"></div>
<div class="r" style="left:582px;top:941px;width:124px;height:30px;background:#f9f9f9;"></div>
<div class="r" style="left:707px;top:941px;width:124px;height:30px;background:#f9f9f9;"></div>
<div class="r" style="left:333px;top:972px;width:123px;height:31px;background:#f9f9f9;"></div>
<div class="r" style="left:457px;top:972px;width:124px;height:31px;background:#fff;"></div>
<div class="r" style="left:582px;top:972px;width:124px;height:31px;background:#f9f9f9;"></div>
<div class="r" style="left:707px;top:972px;width:124px;height:31px;background:#f9f9f9;"></div>
<div class="r" style="left:333px;top:1004px;width:123px;height:30px;background:#f9f9f9;"></div>
<div class="r" style="left:457px;top:1004px;width:124px;height:30px;background:#f9f9f9;"></div>
<div class="r" style="left:582px;top:1004px;width:124px;height:30px;background:#f9f9f9;"></div>
<div class="r" style="left:707px;top:1004px;width:124px;height:30px;background:#f9f9f9;"></div>
<div class="r" style="left:332px;top:738px;width:1px;height:110px;background:#b9b5b1;"></div>
<div class="r" style="left:332px;top:848px;width:1px;height:30px;background:#dde3e9;"></div>
<div class="r" style="left:456px;top:738px;width:1px;height:140px;background:#dde3e9;"></div>
<div class="r" style="left:581px;top:738px;width:1px;height:140px;background:#dde3e9;"></div>
<div class="r" style="left:706px;top:738px;width:1px;height:140px;background:#dde3e9;"></div>
<div class="r" style="left:831px;top:738px;width:1px;height:140px;background:#dde3e9;"></div>
<div class="r" style="left:21px;top:878px;width:811px;height:1px;background:#b9b5b1;"></div>
<div class="r" style="left:21px;top:909px;width:811px;height:1px;background:#dde3e9;"></div>
<div class="r" style="left:21px;top:940px;width:811px;height:1px;background:#dde3e9;"></div>
<div class="r" style="left:21px;top:971px;width:811px;height:1px;background:#dde3e9;"></div>
<div class="r" style="left:21px;top:1003px;width:811px;height:1px;background:#dde3e9;"></div>
<div class="r" style="left:21px;top:1034px;width:811px;height:1px;background:#dde3e9;"></div>
<div class="r" style="left:331px;top:879px;width:1px;height:156px;background:#b9b5b1;"></div>
<div class="r" style="left:456px;top:879px;width:1px;height:156px;background:#dde3e9;"></div>
<div class="r" style="left:581px;top:879px;width:1px;height:156px;background:#dde3e9;"></div>
<div class="r" style="left:706px;top:879px;width:1px;height:156px;background:#dde3e9;"></div>
<div class="r" style="left:831px;top:879px;width:1px;height:156px;background:#dde3e9;"></div>
<div class="t" style="left:85.50px;width:600px;text-align:center;top:744.68px;font-size:14.5px;color:#141414;font-weight:normal;">Forecast</div>
<div class="t" style="left:85.50px;width:600px;text-align:center;top:764.48px;font-size:14.5px;color:#141414;font-weight:normal;">Commit</div>
<div class="t" style="left:85.50px;width:600px;text-align:center;top:799.38px;font-size:14.5px;color:#141414;font-weight:normal;">Base</div>
<div class="t" style="left:85.50px;width:600px;text-align:center;top:819.38px;font-size:14.5px;color:#141414;font-weight:normal;">Forecast</div>
<div class="t" style="left:85.50px;width:600px;text-align:center;top:854.28px;font-size:14.5px;color:#141414;font-weight:normal;">Jun</div>
<div class="t" style="left:210.00px;width:600px;text-align:center;top:744.68px;font-size:14.5px;color:#141414;font-weight:normal;">Forecast</div>
<div class="t" style="left:210.00px;width:600px;text-align:center;top:764.48px;font-size:14.5px;color:#141414;font-weight:normal;">Commit</div>
<div class="t" style="left:210.00px;width:600px;text-align:center;top:799.38px;font-size:14.5px;color:#141414;font-weight:normal;">Adjustment</div>
<div class="t" style="left:210.00px;width:600px;text-align:center;top:819.38px;font-size:14.5px;color:#141414;font-weight:normal;">(+/-)</div>
<div class="t" style="left:210.00px;width:600px;text-align:center;top:854.28px;font-size:14.5px;color:#141414;font-weight:normal;">Jun</div>
<div class="t" style="left:335.00px;width:600px;text-align:center;top:744.68px;font-size:14.5px;color:#141414;font-weight:normal;">Forecast</div>
<div class="t" style="left:335.00px;width:600px;text-align:center;top:764.48px;font-size:14.5px;color:#141414;font-weight:normal;">Commit</div>
<div class="t" style="left:335.00px;width:600px;text-align:center;top:799.38px;font-size:14.5px;color:#141414;font-weight:normal;">Total Plan</div>
<div class="t" style="left:335.00px;width:600px;text-align:center;top:854.28px;font-size:14.5px;color:#141414;font-weight:normal;">Jun</div>
<div class="t" style="left:460.00px;width:600px;text-align:center;top:744.68px;font-size:14.5px;color:#141414;font-weight:normal;">Forecast</div>
<div class="t" style="left:460.00px;width:600px;text-align:center;top:764.48px;font-size:14.5px;color:#141414;font-weight:normal;">Commit</div>
<div class="t" style="left:460.00px;width:600px;text-align:center;top:799.38px;font-size:14.5px;color:#141414;font-weight:normal;">Total Plan</div>
<div class="t" style="left:460.00px;width:600px;text-align:center;top:854.28px;font-size:14.5px;color:#141414;font-weight:normal;">YearTotal</div>
<div class="t" style="left:47.50px;top:881.88px;font-size:14.5px;color:#141414;font-weight:normal;">Central - Products - Div I - Peter Branch</div>
<div class="t" style="left:-24.00px;width:600px;text-align:right;top:881.88px;font-size:14.5px;color:#141414;font-weight:normal;">300,000</div>
<div class="t" style="left:101.00px;width:600px;text-align:right;top:881.88px;font-size:14.5px;color:#141414;font-weight:normal;">751,360</div>
<div class="t" style="left:226.00px;width:600px;text-align:right;top:881.88px;font-size:14.5px;color:#141414;font-weight:normal;">10,446,915</div>
<div class="t" style="left:47.50px;top:913.08px;font-size:14.5px;color:#141414;font-weight:normal;">Central - Products - Div II - Marilyn Richie</div>
<div class="t" style="left:-149.00px;width:600px;text-align:right;top:913.08px;font-size:14.5px;color:#141414;font-weight:normal;">2,672,009</div>
<div class="t" style="left:101.00px;width:600px;text-align:right;top:913.08px;font-size:14.5px;color:#141414;font-weight:normal;">2,672,009</div>
<div class="t" style="left:226.00px;width:600px;text-align:right;top:913.08px;font-size:14.5px;color:#141414;font-weight:normal;">25,901,575</div>
<div class="t" style="left:47.50px;top:944.28px;font-size:14.5px;color:#141414;font-weight:normal;">Central - Products - Div III - James Numan</div>
<div class="t" style="left:-149.00px;width:600px;text-align:right;top:944.28px;font-size:14.5px;color:#141414;font-weight:normal;">1,066,254</div>
<div class="t" style="left:101.00px;width:600px;text-align:right;top:944.28px;font-size:14.5px;color:#141414;font-weight:normal;">1,066,254</div>
<div class="t" style="left:226.00px;width:600px;text-align:right;top:944.28px;font-size:14.5px;color:#141414;font-weight:normal;">10,196,520</div>
<div class="t" style="left:47.50px;top:975.48px;font-size:14.5px;color:#141414;font-weight:normal;">Central - Products - Div IV - Carl Douglas</div>
<div class="r" style="left:335px;top:880px;width:121px;height:27px;overflow:hidden;"><div class="t" style="left:3.6px;top:1.88px;font-size:14.5px;color:#141414">451,360.20127099</div></div>
<div class="r" style="left:27px;top:1008px;width:9px;height:9px;border:1px solid #8e8e8a;background:linear-gradient(#f2f2f2,#dcdcdc);"></div>
<div class="r" style="left:29.2px;top:1013.0px;width:6.2px;height:1.3px;background:#3a3a3a;"></div>
<div class="t" style="left:42.00px;top:1006.68px;font-size:14.5px;color:#141414;font-weight:bold;">NA Products - Central - Alex Smith</div>
<div class="t" style="left:-149.00px;width:600px;text-align:right;top:1006.68px;font-size:14.5px;color:#141414;font-weight:bold;">4,189,623</div>
<div class="t" style="left:-24.00px;width:600px;text-align:right;top:1006.68px;font-size:14.5px;color:#141414;font-weight:bold;">300,000</div>
<div class="t" style="left:101.00px;width:600px;text-align:right;top:1006.68px;font-size:14.5px;color:#141414;font-weight:bold;">4,489,623</div>
<div class="t" style="left:226.00px;width:600px;text-align:right;top:1006.68px;font-size:14.5px;color:#141414;font-weight:bold;">46,545,010</div>
<div class="r" style="left:332px;top:878px;width:121px;height:26px;border:3px solid #000;"></div>
<div class="r" style="left:453px;top:904px;width:6px;height:6px;background:#000;outline:1px solid #fff;"></div>
<div class="r" style="left:1494px;top:374px;width:12px;height:12px;background:#267cb3;"></div>
<div class="t" style="left:1510.50px;top:371.93px;font-size:14px;color:#333;font-weight:normal;text-decoration:underline;">NA Products - Central - Alex Smith</div>
<div class="t" style="left:789.80px;width:600px;text-align:right;top:395.57px;font-size:13.4px;color:#858585;font-weight:normal;">240M</div>
<div class="t" style="left:789.80px;width:600px;text-align:right;top:485.47px;font-size:13.4px;color:#858585;font-weight:normal;">200M</div>
<div class="t" style="left:789.80px;width:600px;text-align:right;top:575.37px;font-size:13.4px;color:#858585;font-weight:normal;">160M</div>
<div class="t" style="left:789.80px;width:600px;text-align:right;top:665.27px;font-size:13.4px;color:#858585;font-weight:normal;">120M</div>
<div class="t" style="left:789.80px;width:600px;text-align:right;top:755.17px;font-size:13.4px;color:#858585;font-weight:normal;">80M</div>
<div class="t" style="left:789.80px;width:600px;text-align:right;top:845.07px;font-size:13.4px;color:#858585;font-weight:normal;">40M</div>
<div class="t" style="left:789.80px;width:600px;text-align:right;top:934.97px;font-size:13.4px;color:#858585;font-weight:normal;">0M</div>
<div class="r" style="left:1396px;top:402px;width:1px;height:540px;background:#a0a0a0;"></div>
<div class="r" style="left:1396px;top:941px;width:495px;height:1px;background:#a0a0a0;"></div>
<div class="r" style="left:1406.3px;top:811.1px;width:61.7px;height:129.89999999999998px;background:#267cb3;"></div>
<div class="r" style="left:1488.9px;top:855.0px;width:61.7px;height:86.0px;background:#267cb3;"></div>
<div class="r" style="left:1571.2px;top:761.4px;width:61.7px;height:179.60000000000002px;background:#267cb3;"></div>
<div class="r" style="left:1654.0px;top:836.2px;width:61.7px;height:104.79999999999995px;background:#267cb3;"></div>
<div class="r" style="left:1736.0px;top:453.9px;width:61.7px;height:487.1px;background:#267cb3;"></div>
<div class="r" style="left:1818.0px;top:934.0px;width:61.7px;height:7.0px;background:#267cb3;"></div>
<div class="t" style="left:1449.40px;top:947px;font-size:14px;line-height:13.75px;color:#333;text-decoration:underline;transform-origin:0 0;transform:rotate(90deg);">Target<br>YearTotal</div>
<div class="t" style="left:1538.88px;top:947px;font-size:14px;line-height:13.75px;color:#333;text-decoration:underline;transform-origin:0 0;transform:rotate(90deg);">CY<br>Bookings<br>YearTotal</div>
<div class="t" style="left:1621.17px;top:947px;font-size:14px;line-height:13.75px;color:#333;text-decoration:underline;transform-origin:0 0;transform:rotate(90deg);">Sales<br>Revenue<br>YearTotal</div>
<div class="t" style="left:1703.97px;top:947px;font-size:14px;line-height:13.75px;color:#333;text-decoration:underline;transform-origin:0 0;transform:rotate(90deg);">Forecast<br>Commit<br>YearTotal</div>
<div class="t" style="left:1785.97px;top:947px;font-size:14px;line-height:13.75px;color:#333;text-decoration:underline;transform-origin:0 0;transform:rotate(90deg);">Gross<br>Pipe<br>YearTotal</div>
<div class="t" style="left:1861.10px;top:947px;font-size:14px;line-height:13.75px;color:#333;text-decoration:underline;transform-origin:0 0;transform:rotate(90deg);">Compensation<br>YearTotal</div>
<div class="r" style="left:1918.6px;top:626px;width:1.4px;height:17px;background:#000;"></div>
</body></html>
